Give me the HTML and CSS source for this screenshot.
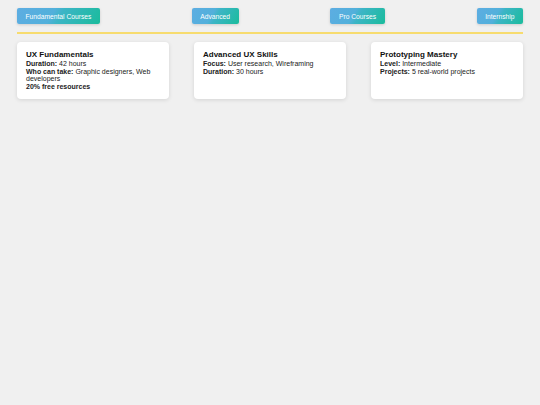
FILE: index.html
```html
<!DOCTYPE html>
<html lang="en">
<head>
    <meta charset="UTF-8" />
    <title>UX Courses</title>
    <link rel="stylesheet" href="styles.css">
</head>
<body>
    <nav class="menu">
        <button class="menu-btn">Fundamental Courses</button>
        <button class="menu-btn">Advanced</button>
        <button class="menu-btn">Pro Courses</button>
        <button class="menu-btn">Internship</button>
    </nav>

    <div class="cards">
        <div class="card">
            <h3>UX Fundamentals</h3>
            <p><b>Duration:</b> 42 hours</p>
            <p><b>Who can take:</b> Graphic designers, Web developers</p>
            <p><b>20% free resources</b></p>
        </div>
        <div class="card">
            <h3>Advanced UX Skills</h3>
            <p><b>Focus:</b> User research, Wireframing</p>
            <p><b>Duration:</b> 30 hours</p>
        </div>
        <div class="card">
            <h3>Prototyping Mastery</h3>
            <p><b>Level:</b> Intermediate</p>
            <p><b>Projects:</b> 5 real-world projects</p>
        </div>
    </div>
</body>
</html>
```

FILE: styles.css
```css
body {
    margin: 0;
    padding: 8px 17px;
    background: #f0f0f0;
    font-family: 'Liberation Sans', Arial, sans-serif;
    color: #111;
}

.menu {
    display: flex;
    justify-content: space-between;
    align-items: center;
    padding-bottom: 8px;
    border-bottom: 2px solid #f7dc6f;
}

.menu-btn {
    height: 16px;
    padding: 0 8.5px;
    border: none;
    border-radius: 2px;
    font-family: inherit;
    font-size: 6.7px;
    color: #fff;
    background: linear-gradient(120deg, #5dade2 0%, #52b0db 42%, #3cb5c6 52%, #1abc9c 100%);
    box-shadow: 0 1px 3px rgba(0, 0, 0, 0.15);
    cursor: pointer;
}

.cards {
    display: grid;
    grid-template-columns: repeat(3, 1fr);
    gap: 25px;
    margin-top: 8px;
}

.card {
    background: #fff;
    border-radius: 4px;
    padding: 8px 9px 9px;
    box-shadow: 0 1px 4px rgba(0, 0, 0, 0.12);
    min-height: 39px;
}

.card h3 {
    margin: 0 0 1px;
    font-size: 8px;
    line-height: 9px;
}

.card p {
    margin: 0;
    font-size: 7px;
    line-height: 7.6px;
    color: #222;
}
```
